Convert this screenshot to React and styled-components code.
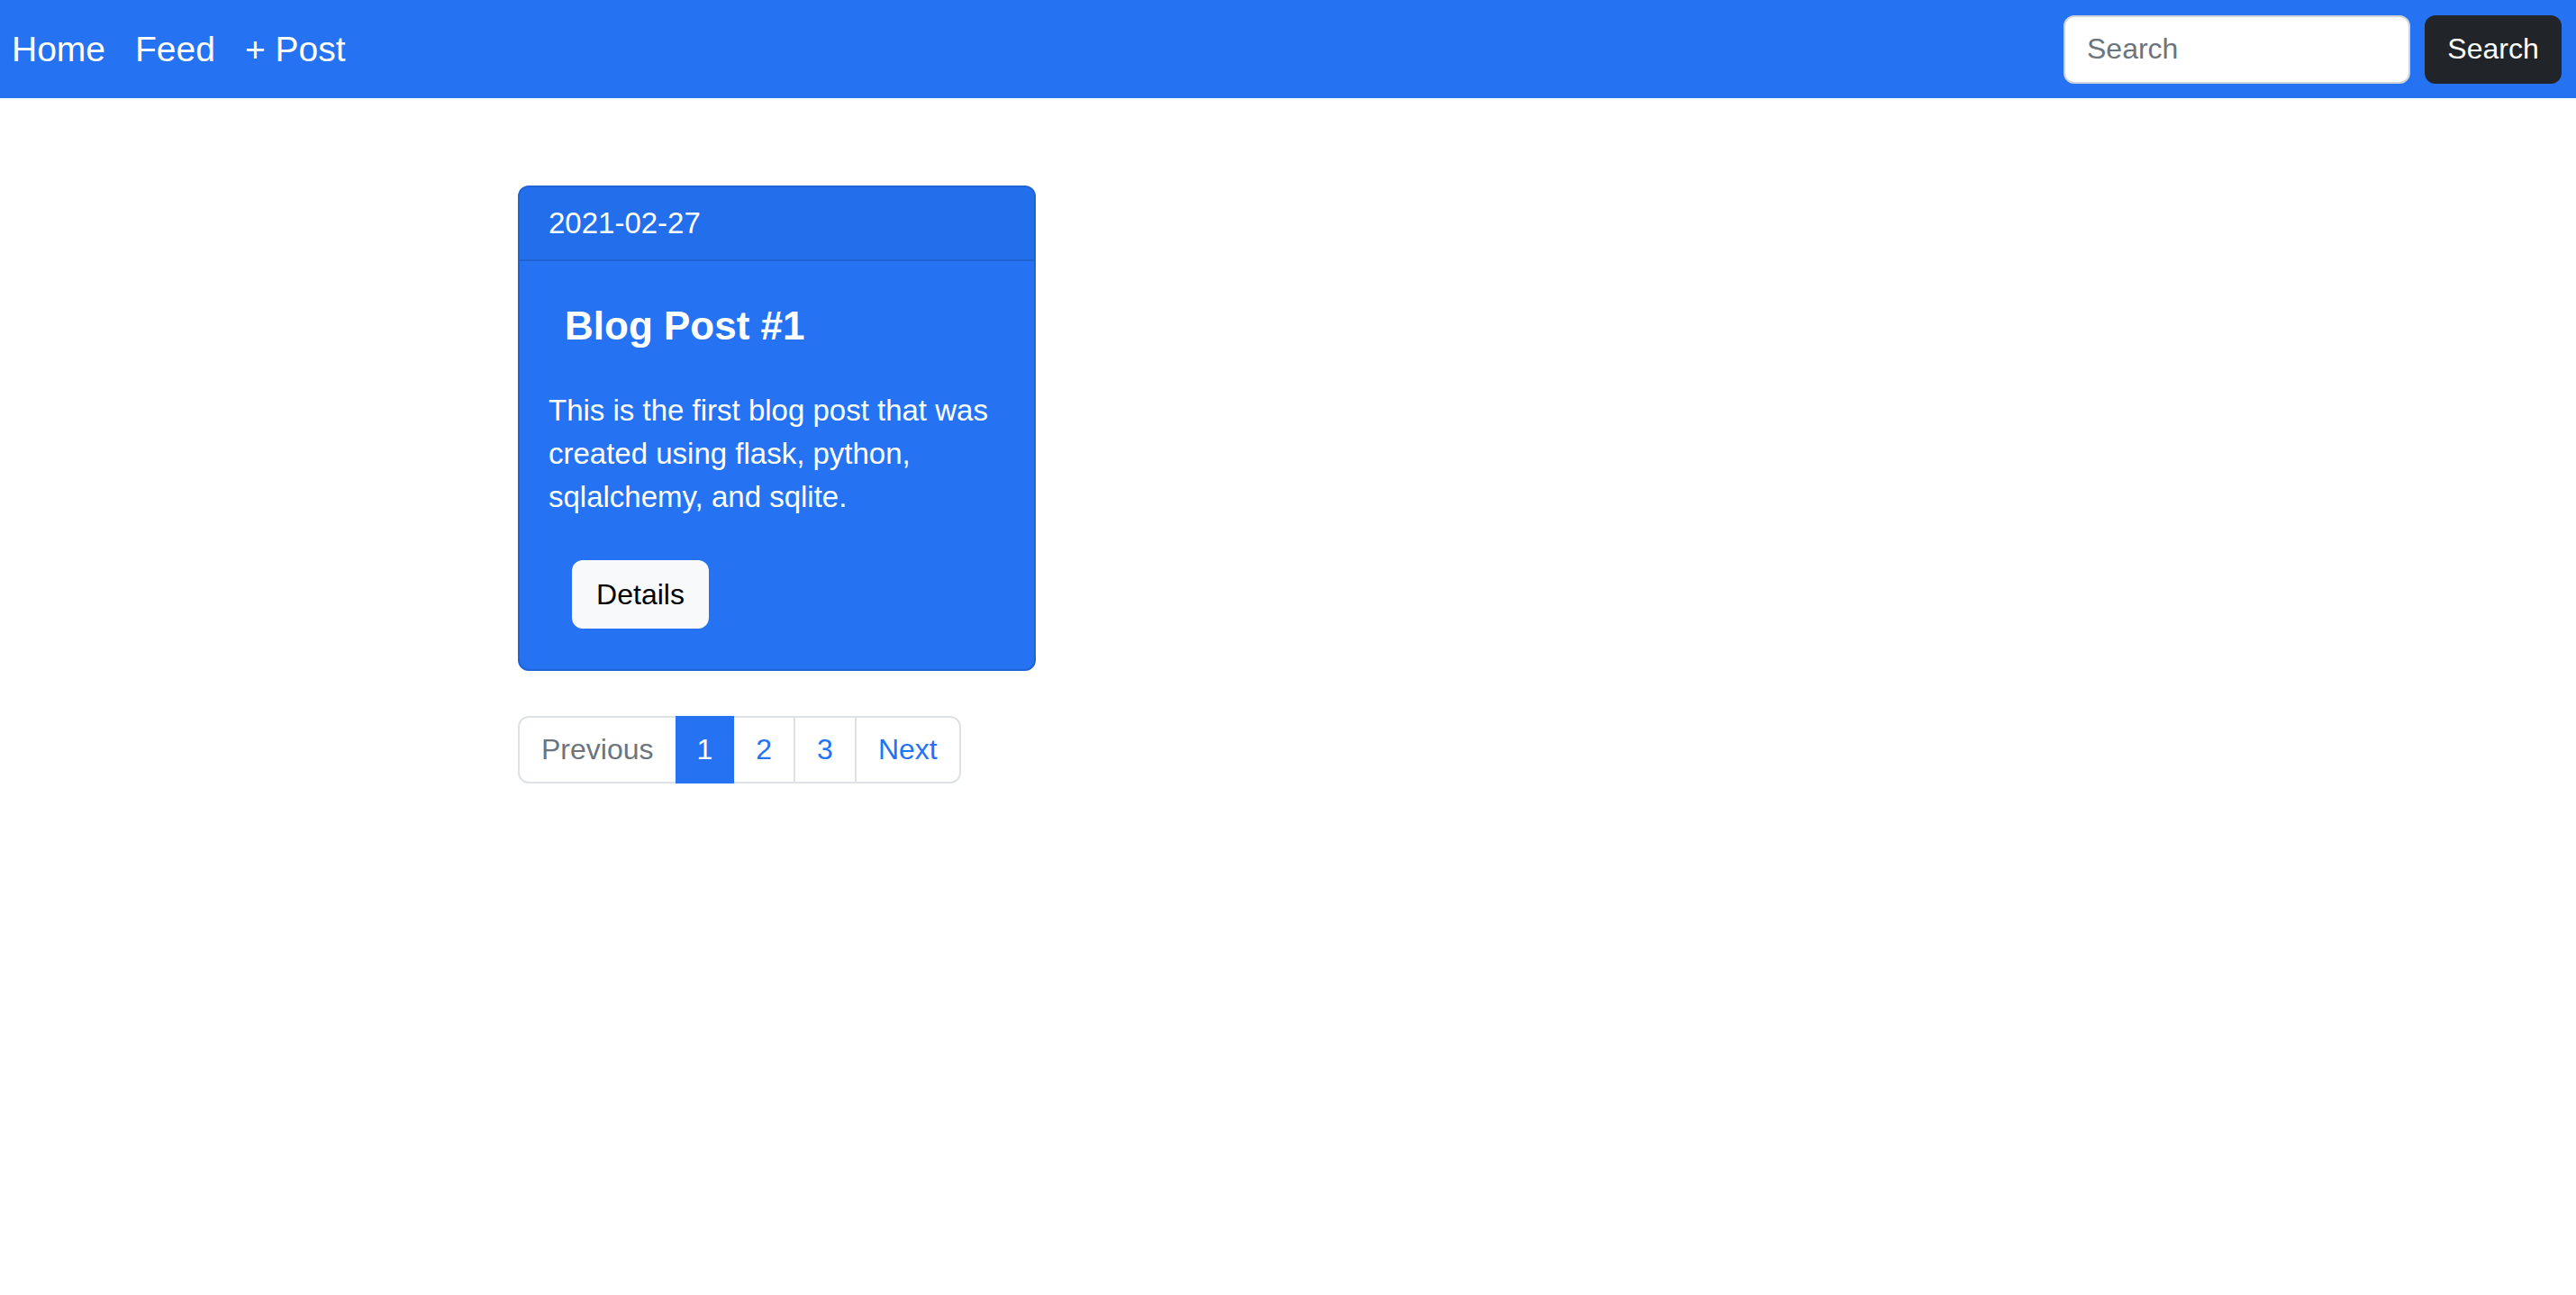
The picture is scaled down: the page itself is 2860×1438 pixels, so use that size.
import React from 'react';
import styled, { createGlobalStyle } from 'styled-components';

const GlobalStyle = createGlobalStyle`
  body {
    margin: 0;
    background: #fff;
    font-family: "Liberation Sans", Arial, sans-serif;
    color: #212529;
  }
`;

const pages = ['1', '2', '3'];

function App() {
  return (
    <>
      <GlobalStyle />
      <Navbar>
        <NavLinks>
          <NavLink>Home</NavLink>
          <NavLink>Feed</NavLink>
          <NavLink>+ Post</NavLink>
        </NavLinks>
        <SearchForm>
          <SearchInput placeholder="Search" />
          <SearchButton>Search</SearchButton>
        </SearchForm>
      </Navbar>
      <Main>
        <Card>
          <CardHeader>2021-02-27</CardHeader>
          <CardBody>
            <CardTitle>Blog Post #1</CardTitle>
            <CardText>
              This is the first blog post that was created using flask, python, sqlalchemy, and sqlite.
            </CardText>
            <DetailsButton>Details</DetailsButton>
          </CardBody>
        </Card>
        <Pagination>
          <PageLink disabled first>Previous</PageLink>
          {pages.map((p) => (
            <PageLink key={p} active={p === '1'}>{p}</PageLink>
          ))}
          <PageLink last>Next</PageLink>
        </Pagination>
      </Main>
    </>
  );
}

const Navbar = styled.nav`
  height: 109px;
  background: #2573f2;
  display: flex;
  align-items: center;
  justify-content: space-between;
  padding: 0 16px 0 13px;
  box-sizing: border-box;
`;

const NavLinks = styled.div`
  display: flex;
  gap: 33px;
`;

const NavLink = styled.a`
  color: #fff;
  font-size: 39px;
  line-height: 48px;
  cursor: pointer;
`;

const SearchForm = styled.form`
  display: flex;
  gap: 16px;
  margin: 0;
`;

const SearchInput = styled.input`
  width: 385px;
  height: 76px;
  box-sizing: border-box;
  border: 2px solid #ced4da;
  border-radius: 12px;
  padding: 0 24px;
  font-family: inherit;
  font-size: 32px;
  color: #212529;
  outline: none;
  &::placeholder {
    color: #6c757d;
  }
`;

const SearchButton = styled.button`
  height: 76px;
  width: 152px;
  background: #212529;
  color: #fff;
  border: none;
  border-radius: 12px;
  font-family: inherit;
  font-size: 32px;
  cursor: pointer;
`;

const Main = styled.main`
  padding: 97px 0 0 575px;
`;

const Card = styled.div`
  width: 575px;
  box-sizing: border-box;
  background: #2573f2;
  border: 2px solid #1f63d4;
  border-radius: 12px;
  overflow: hidden;
  color: #fff;
`;

const CardHeader = styled.div`
  padding: 16px 32px;
  font-size: 33px;
  line-height: 48px;
  background: #236eea;
  border-bottom: 2px solid #1f62d0;
`;

const CardBody = styled.div`
  padding: 32px;
  display: flex;
  flex-direction: column;
  align-items: flex-start;
`;

const CardTitle = styled.h4`
  margin: 13px 0 44px 18px;
  font-size: 44px;
  line-height: 53px;
  font-weight: 700;
`;

const CardText = styled.p`
  margin: 0 0 32px;
  font-size: 33px;
  line-height: 48px;
`;

const DetailsButton = styled.button`
  margin: 14px 0 13px 26px;
  height: 76px;
  width: 152px;
  background: #f8f9fa;
  color: #000;
  border: none;
  border-radius: 12px;
  font-family: inherit;
  font-size: 32px;
  cursor: pointer;
`;

const Pagination = styled.ul`
  display: flex;
  list-style: none;
  margin: 50px 0 0;
  padding: 0;
`;

const PageLink = styled.li`
  height: 75px;
  box-sizing: border-box;
  padding: 0 ${(p) => (p.active ? '22px' : '24px')};
  display: flex;
  align-items: center;
  font-size: 32px;
  border: 2px solid ${(p) => (p.active ? '#2573f2' : '#dee2e6')};
  background: ${(p) => (p.active ? '#2573f2' : '#fff')};
  color: ${(p) => (p.active ? '#fff' : p.disabled ? '#6c757d' : '#2573f2')};
  margin-left: ${(p) => (p.first ? '0' : '-2px')};
  border-radius: ${(p) => (p.first ? '12px 0 0 12px' : p.last ? '0 12px 12px 0' : '0')};
  position: relative;
  z-index: ${(p) => (p.active ? 1 : 0)};
  cursor: pointer;
`;

export default App;
